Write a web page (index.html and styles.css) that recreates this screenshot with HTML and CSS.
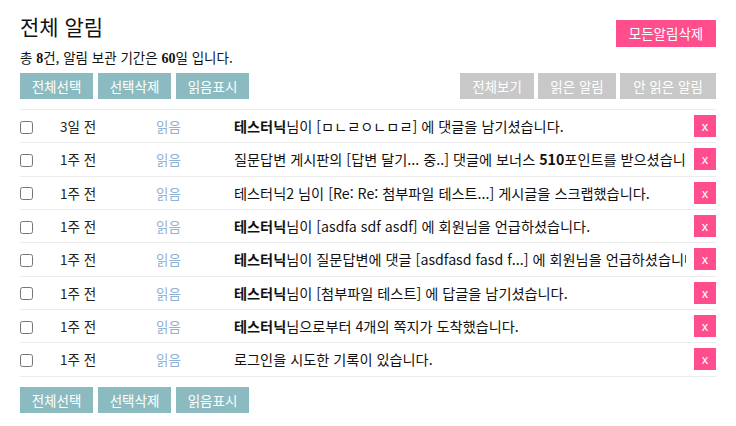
FILE: index.html
```html
<!DOCTYPE html>
<html lang="ko">
<head>
<meta charset="utf-8">
<title>전체 알림</title>
<link rel="stylesheet" href="styles.css">
</head>
<body>
<div class="wrap">
  <div class="header">
    <h1 class="title">전체 알림</h1>
    <button class="btn btn-pink btn-delall">모든알림삭제</button>
  </div>
  <p class="summary">총 <b>8</b>건, 알림 보관 기간은 <b>60</b>일 입니다.</p>
  <div class="toolbar">
    <div class="group">
      <button class="btn btn-teal">전체선택</button>
      <button class="btn btn-teal">선택삭제</button>
      <button class="btn btn-teal">읽음표시</button>
    </div>
    <div class="group">
      <button class="btn btn-gray w74">전체보기</button>
      <button class="btn btn-gray w78">읽은 알림</button>
      <button class="btn btn-gray w96">안 읽은 알림</button>
    </div>
  </div>
  <ul class="list">
    <li class="row"><input type="checkbox" class="chk"><span class="date">3일 전</span><span class="state">읽음</span><span class="msg"><b>테스터닉</b>님이 [ㅁㄴㄹㅇㄴㅁㄹ] 에 댓글을 남기셨습니다.</span><button class="btn btn-pink x">x</button></li>
    <li class="row"><input type="checkbox" class="chk"><span class="date">1주 전</span><span class="state">읽음</span><span class="msg">질문답변 게시판의 [답변 달기... 중..] 댓글에 보너스 <b>510</b>포인트를 받으셨습니다.</span><button class="btn btn-pink x">x</button></li>
    <li class="row"><input type="checkbox" class="chk"><span class="date">1주 전</span><span class="state">읽음</span><span class="msg">테스터닉2 님이 [Re: Re: 첨부파일 테스트...] 게시글을 스크랩했습니다.</span><button class="btn btn-pink x">x</button></li>
    <li class="row"><input type="checkbox" class="chk"><span class="date">1주 전</span><span class="state">읽음</span><span class="msg"><b>테스터닉</b>님이 [asdfa sdf asdf] 에 회원님을 언급하셨습니다.</span><button class="btn btn-pink x">x</button></li>
    <li class="row"><input type="checkbox" class="chk"><span class="date">1주 전</span><span class="state">읽음</span><span class="msg"><b>테스터닉</b>님이 질문답변에 댓글 [asdfasd fasd f...] 에 회원님을 언급하셨습니다.</span><button class="btn btn-pink x">x</button></li>
    <li class="row"><input type="checkbox" class="chk"><span class="date">1주 전</span><span class="state">읽음</span><span class="msg"><b>테스터닉</b>님이 [첨부파일 테스트] 에 답글을 남기셨습니다.</span><button class="btn btn-pink x">x</button></li>
    <li class="row"><input type="checkbox" class="chk"><span class="date">1주 전</span><span class="state">읽음</span><span class="msg"><b>테스터닉</b>님으로부터 4개의 쪽지가 도착했습니다.</span><button class="btn btn-pink x">x</button></li>
    <li class="row"><input type="checkbox" class="chk"><span class="date">1주 전</span><span class="state">읽음</span><span class="msg">로그인을 시도한 기록이 있습니다.</span><button class="btn btn-pink x">x</button></li>
  </ul>
  <div class="toolbar bottom">
    <div class="group">
      <button class="btn btn-teal">전체선택</button>
      <button class="btn btn-teal">선택삭제</button>
      <button class="btn btn-teal">읽음표시</button>
    </div>
  </div>
</div>
</body>
</html>
```

FILE: styles.css
```css
* { box-sizing: border-box; }
body {
  margin: 0;
  background: #fff;
  color: #222;
  font-family: "Noto Sans CJK KR", "Noto Sans", sans-serif;
  font-size: 13px;
}
.wrap { padding: 0 20px; }
.header {
  display: flex;
  justify-content: space-between;
  align-items: flex-start;
  padding-top: 11px;
  height: 47px;
}
.title {
  margin: 0;
  font-size: 21px;
  font-weight: 400;
  line-height: 30px;
  color: #111;
}
.btn {
  border: 0;
  margin: 0;
  padding: 0;
  font-family: "Noto Sans CJK KR", "Noto Sans", sans-serif;
  font-size: 13.5px;
  color: #fff;
  cursor: pointer;
  line-height: 26px;
  height: 26px;
}
.btn-delall { margin-top: 9px; width: 100px; height: 27px; line-height: 27px; }
.btn-pink { background: #ff4d8d; }
.btn-teal { background: #8bbbc0; width: 73px; }
.btn-gray { background: #c8c8c8; }
.w74 { width: 74px; }
.w78 { width: 78px; }
.w96 { width: 96px; }
.summary {
  margin: 0;
  height: 20px;
  line-height: 20px;
  font-size: 13.5px;
  color: #111;
}
.summary b {
  font-family: "Liberation Serif", serif;
  font-size: 14px;
  font-weight: 700;
  line-height: 1;
}
.toolbar {
  display: flex;
  justify-content: space-between;
  margin-top: 6px;
}
.group { display: flex; gap: 5px; }
.group .btn-gray + .btn-gray { margin-left: -1px; }
.list {
  list-style: none;
  margin: 10px 0 0;
  padding: 0;
  border-top: 1px solid #ececec;
}
.row {
  display: flex;
  align-items: center;
  height: 33.333px;
  border-bottom: 1px solid #ececec;
  font-size: 14.2px;
}
.chk {
  margin: 2px 0 0;
  width: 13px;
  height: 13px;
  flex: none;
}
.date { width: 123px; padding-left: 27px; flex: none; color: #222; font-size: 13.5px; }
.state { width: 78px; color: #8fb2d4; flex: none; font-size: 13.5px; }
.msg {
  width: 452px;
  flex: none;
  white-space: nowrap;
  overflow: hidden;
  color: #111;
}
.msg b { font-weight: 700; }
.x {
  margin-left: auto;
  width: 22px;
  height: 22px;
  line-height: 20px;
  font-size: 13px;
}
.bottom { margin-top: 10px; }
```
